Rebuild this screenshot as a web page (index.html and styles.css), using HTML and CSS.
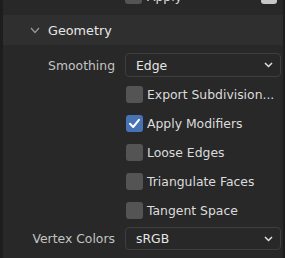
FILE: index.html
```html
<!doctype html>
<html>
    <head>
        <title>Export settings: Geometry</title>
        <link rel="stylesheet" href="styles.css">
    </head>
    <body>
        <div class="panel">
            <div class="prev-row">
                <span class="check prev-check"></span>
                <span class="prev-text">Apply</span>
                <span class="prev-box"></span>
            </div>
            <div class="panel-header">
                <svg class="chevron" width="10" height="7" viewBox="0 0 10 7">
                    <path d="M1 1 L5 5.5 L9 1" fill="none" stroke="#9a9a9a" stroke-width="1.2"/>
                </svg>
                <span>Geometry</span>
            </div>
            <div class="panel-body">
                <div class="row row-select">
                    <label class="field-label">Smoothing</label>
                    <div class="select">
                        <span>Edge</span>
                        <svg width="9" height="6" viewBox="0 0 9 6">
                            <path d="M1 1 L4.5 4.5 L8 1" fill="none" stroke="#e0e0e0" stroke-width="1.5"/>
                        </svg>
                    </div>
                </div>
                <div class="row row-check">
                    <span class="check"></span>
                    <span class="check-label">Export Subdivision...</span>
                </div>
                <div class="row row-check">
                    <span class="check checked">
                        <svg width="17" height="17" viewBox="0 0 17 17">
                            <path d="M4 8.8 L7.2 12 L13 4.8" fill="none" stroke="#fff" stroke-width="2" stroke-linecap="round" stroke-linejoin="round"/>
                        </svg>
                    </span>
                    <span class="check-label">Apply Modifiers</span>
                </div>
                <div class="row row-check">
                    <span class="check"></span>
                    <span class="check-label">Loose Edges</span>
                </div>
                <div class="row row-check">
                    <span class="check"></span>
                    <span class="check-label">Triangulate Faces</span>
                </div>
                <div class="row row-check">
                    <span class="check"></span>
                    <span class="check-label">Tangent Space</span>
                </div>
                <div class="row row-select row-last">
                    <label class="field-label">Vertex Colors</label>
                    <div class="select">
                        <span>sRGB</span>
                        <svg width="9" height="6" viewBox="0 0 9 6">
                            <path d="M1 1 L4.5 4.5 L8 1" fill="none" stroke="#e0e0e0" stroke-width="1.5"/>
                        </svg>
                    </div>
                </div>
            </div>
        </div>
    </body>
</html>
```
FILE: styles.css
```css
body {
    margin: 0;
    background-color: #1d1d1d;
    font-family: "DejaVu Sans", sans-serif;
    font-size: 12.4px;
    overflow: hidden;
}
.panel {
    margin-left: 3px;
    width: 280px;
    height: 258px;
    background-color: #282828;
}
.prev-row {
    height: 15px;
    position: relative;
    overflow: hidden;
}
.prev-check {
    position: absolute;
    left: 122px;
    top: -13px;
}
.prev-text {
    position: absolute;
    left: 144px;
    top: -11px;
    color: #dcdcdc;
}
.prev-box {
    position: absolute;
    left: 258px;
    top: -12px;
    width: 16px;
    height: 16px;
    border-radius: 3px;
    background-color: #c8c8c8;
}
.panel-header {
    height: 30px;
    display: flex;
    align-items: center;
    background-color: #2f2f2f;
    color: #e6e6e6;
    font-size: 12.8px;
}
.chevron {
    margin-left: 27px;
    margin-right: 8px;
}
.panel-body {
    padding-top: 8px;
}
.row {
    display: flex;
    align-items: center;
}
.row-select {
    height: 24px;
    margin-bottom: 3px;
}
.row-last {
    height: 23px;
    margin-top: 2px;
    margin-bottom: 0;
}
.row-check {
    height: 29px;
    padding-left: 123px;
}
.field-label {
    width: 112px;
    padding-right: 10px;
    text-align: right;
    color: #c4c4c4;
}
.select {
    box-sizing: border-box;
    width: 156px;
    height: 100%;
    border: 1px solid #3e3e3e;
    border-radius: 4px;
    background-color: #282828;
    color: #e6e6e6;
    display: flex;
    align-items: center;
    justify-content: space-between;
    padding: 0 7px 0 10px;
}
.check {
    width: 17px;
    height: 17px;
    border-radius: 3px;
    background-color: #545454;
    flex-shrink: 0;
}
.check.checked {
    background-color: #4772b3;
}
.check svg {
    display: block;
}
.check-label {
    margin-left: 4px;
    color: #dcdcdc;
}
```
